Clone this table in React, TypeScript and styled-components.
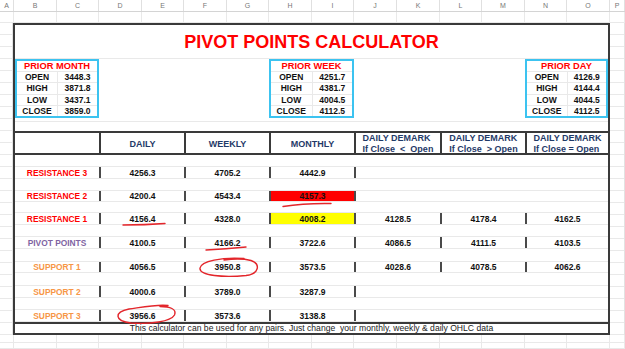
import React, {FC} from 'react';
import styled, {createGlobalStyle} from "styled-components";

const GlobalStyle = createGlobalStyle`
  body {
    margin: 0;
    background: #fff;
    font-family: "Liberation Sans", Arial, sans-serif;
  }
`

const COLS = [
    {l: 'A', w: 14}, {l: 'B', w: 43}, {l: 'C', w: 42}, {l: 'D', w: 43}, {l: 'E', w: 42},
    {l: 'F', w: 43}, {l: 'G', w: 42}, {l: 'H', w: 43}, {l: 'I', w: 42}, {l: 'J', w: 43},
    {l: 'K', w: 43}, {l: 'L', w: 42}, {l: 'M', w: 43}, {l: 'N', w: 42}, {l: 'O', w: 43},
    {l: 'P', w: 15},
]

const TRACKS = '84px 85px 85px 85px 86px 85px 83px'
const DARK = '#3a3a3a'
const FAINT = '#e9e9e9'

export const Page = styled.div`
  position: relative;
  width: 625px;
  height: 349px;
  overflow: hidden;
`
export const ColHeaderRow = styled.div`
  display: flex;
  height: 12px;
  box-sizing: border-box;
  border-bottom: 1px solid #d4d4d4;
`
export const ColHeaderCell = styled.div<{ $w: number }>`
  width: ${p => p.$w}px;
  flex: none;
  box-sizing: border-box;
  border-right: 1px solid #e0e0e0;
  display: flex;
  align-items: center;
  justify-content: center;
  font-size: 7px;
  color: #777;
`
export const GridRow = styled.div<{ $h: number }>`
  display: flex;
  height: ${p => p.$h}px;
`
export const GridCell = styled.div<{ $w: number }>`
  width: ${p => p.$w}px;
  flex: none;
  box-sizing: border-box;
  border-right: 1px solid ${FAINT};
  border-bottom: 1px solid ${FAINT};
`
export const SheetBody = styled.div`
  display: flex;
  height: 312px;
  background: repeating-linear-gradient(to bottom, transparent 0 11px, ${FAINT} 11px 12px);
`
export const Margin = styled.div<{ $w: number }>`
  width: ${p => p.$w}px;
  flex: none;
  border-right: 1px solid #e2e2e2;
  box-sizing: border-box;
`
export const Calc = styled.div`
  width: 597px;
  flex: none;
  box-sizing: border-box;
  border: 2px solid ${DARK};
  background: #fff;
  display: flex;
  flex-direction: column;
`
export const TitleBar = styled.div`
  height: 34px;
  box-sizing: border-box;
  display: flex;
  align-items: center;
  justify-content: center;
  padding-top: 1px;
  color: #ff0000;
  font-weight: bold;
  font-size: 18px;
  border-bottom: 1px solid ${FAINT};
`
export const PriorRow = styled.div`
  display: grid;
  grid-template-columns: ${TRACKS};
  height: 59px;
`
export const PriorBox = styled.div<{ $col: number }>`
  grid-column: ${p => p.$col};
  box-sizing: border-box;
  border: 2px solid #3cc3f0;
  display: grid;
  grid-template-rows: 10px repeat(4, 1fr);
`
export const PriorTitle = styled.div`
  color: #ff0000;
  font-weight: bold;
  font-size: 9.3px;
  line-height: 10px;
  text-align: center;
`
export const PriorLine = styled.div`
  display: grid;
  grid-template-columns: 1fr 1fr;
  border-top: 1px solid ${FAINT};
`
export const PriorCell = styled.div<{ $divider?: boolean }>`
  display: flex;
  align-items: center;
  justify-content: center;
  font-weight: bold;
  font-size: 8.5px;
  color: #111;
  border-left: ${p => p.$divider ? `1px solid ${FAINT}` : 'none'};
`
export const GapRow = styled.div`
  height: 13px;
  background: linear-gradient(${FAINT}, ${FAINT}) 0 3px / 100% 1px no-repeat;
`
export const HeaderRow = styled.div`
  display: grid;
  grid-template-columns: ${TRACKS};
  height: 24px;
  box-sizing: border-box;
  border-top: 2px solid ${DARK};
  border-bottom: 2px solid ${DARK};
`
export const HeadCell = styled.div<{ $first?: boolean }>`
  border-left: ${p => p.$first ? 'none' : `2px solid ${DARK}`};
  display: flex;
  flex-direction: column;
  align-items: center;
  justify-content: center;
  color: #1f3a68;
  font-weight: bold;
  font-size: 9px;
  line-height: 11px;
  white-space: pre;
`
export const DataRow = styled.div<{ $h: number }>`
  display: grid;
  grid-template-columns: ${TRACKS};
  height: ${p => p.$h}px;
  box-sizing: border-box;
  border-bottom: 1px solid ${FAINT};
`
export const RowLabel = styled.div<{ $color: string }>`
  display: flex;
  align-items: center;
  justify-content: center;
  color: ${p => p.$color};
  font-weight: bold;
  font-size: 8.4px;
`
export const ValueCell = styled.div<{ $mark?: boolean, $bg?: string }>`
  display: flex;
  align-items: center;
  justify-content: center;
  border-left: ${p => p.$mark ? '2px solid #4a4a4a' : '2px solid transparent'};
  background: ${p => p.$bg || 'transparent'};
  font-weight: bold;
  font-size: 8.5px;
  color: #111;
`
export const Footer = styled.div`
  height: 11px;
  box-sizing: border-box;
  border-top: 2px solid ${DARK};
  font-size: 8.6px;
  line-height: 9px;
  color: #222;
  text-align: center;
  white-space: pre;
`
export const Annotations = styled.svg`
  position: absolute;
  left: 0;
  top: 0;
  pointer-events: none;
`

interface IPrior {
    title: string
    col: number
    values: string[]
}

const PRIORS: IPrior[] = [
    {title: 'PRIOR MONTH', col: 1, values: ['3448.3', '3871.8', '3437.1', '3859.0']},
    {title: 'PRIOR WEEK', col: 4, values: ['4251.7', '4381.7', '4004.5', '4112.5']},
    {title: 'PRIOR DAY', col: 7, values: ['4126.9', '4144.4', '4044.5', '4112.5']},
]
const OHLC = ['OPEN', 'HIGH', 'LOW', 'CLOSE']

interface ILevel {
    label?: string
    color?: string
    values?: string[]
    bg?: string
    h: number
}

const RED = '#ff0000'
const PURPLE = '#8064a2'
const ORANGE = '#f79646'

const LEVELS: ILevel[] = [
    {h: 12},
    {label: 'RESISTANCE 3', color: RED, values: ['4256.3', '4705.2', '4442.9'], h: 12},
    {h: 12},
    {label: 'RESISTANCE 2', color: RED, values: ['4200.4', '4543.4', '4157.3'], bg: RED, h: 11},
    {h: 11},
    {label: 'RESISTANCE 1', color: RED, values: ['4156.4', '4328.0', '4008.2', '4128.5', '4178.4', '4162.5'], bg: '#ffff00', h: 12},
    {h: 12},
    {label: 'PIVOT POINTS', color: PURPLE, values: ['4100.5', '4166.2', '3722.6', '4086.5', '4111.5', '4103.5'], h: 12},
    {h: 13},
    {label: 'SUPPORT 1', color: ORANGE, values: ['4056.5', '3950.8', '3573.5', '4028.6', '4078.5', '4062.6'], h: 11},
    {h: 13},
    {label: 'SUPPORT 2', color: ORANGE, values: ['4000.6', '3789.0', '3287.9'], h: 12},
    {h: 12},
    {label: 'SUPPORT 3', color: ORANGE, values: ['3956.6', '3573.6', '3138.8'], h: 12},
]

const HEADS = ['DAILY', 'WEEKLY', 'MONTHLY', 'DAILY DEMARK\nIf Close  <  Open', 'DAILY DEMARK\nIf Close  > Open', 'DAILY DEMARK\nIf Close = Open']

const Level: FC<{ level: ILevel }> = ({level}) => {
    if (!level.label) return <DataRow $h={level.h}/>
    const v = level.values || []
    return (
        <DataRow $h={level.h}>
            <RowLabel $color={level.color || '#000'}>{level.label}</RowLabel>
            {[0, 1, 2, 3, 4, 5].map(i => (
                <ValueCell key={i} $mark={i < 4 || !!v[i]} $bg={i === 2 ? level.bg : undefined}>
                    {v[i] || ''}
                </ValueCell>
            ))}
        </DataRow>
    )
}

const App: FC = () => {
    return (
        <Page>
            <GlobalStyle/>
            <ColHeaderRow>
                {COLS.map(c => <ColHeaderCell key={c.l} $w={c.w}>{c.l}</ColHeaderCell>)}
            </ColHeaderRow>
            <GridRow $h={11}>
                {COLS.map(c => <GridCell key={c.l} $w={c.w}/>)}
            </GridRow>
            <SheetBody>
                <Margin $w={13}/>
                <Calc>
                    <TitleBar>PIVOT POINTS CALCULATOR</TitleBar>
                    <PriorRow>
                        {PRIORS.map(p => (
                            <PriorBox key={p.title} $col={p.col}>
                                <PriorTitle>{p.title}</PriorTitle>
                                {OHLC.map((k, i) => (
                                    <PriorLine key={k}>
                                        <PriorCell>{k}</PriorCell>
                                        <PriorCell $divider>{p.values[i]}</PriorCell>
                                    </PriorLine>
                                ))}
                            </PriorBox>
                        ))}
                    </PriorRow>
                    <GapRow/>
                    <HeaderRow>
                        <HeadCell $first/>
                        {HEADS.map(h => <HeadCell key={h}>{h}</HeadCell>)}
                    </HeaderRow>
                    {LEVELS.map((l, i) => <Level key={i} level={l}/>)}
                    <Footer>This calculator can be used for any pairs. Just change  your monthly, weekly &amp; daily OHLC data</Footer>
                </Calc>
                <Margin $w={15}/>
            </SheetBody>
            <GridRow $h={8}>
                {COLS.map(c => <GridCell key={c.l} $w={c.w}/>)}
            </GridRow>
            <GridRow $h={6}>
                {COLS.map(c => <GridCell key={c.l} $w={c.w}/>)}
            </GridRow>
            <Annotations width="625" height="349" viewBox="0 0 625 349" fill="none" stroke="#e3262b"
                         strokeWidth="1.4" strokeLinecap="round">
                <path d="M283 206.5 Q305 203 331 203.5"/>
                <path d="M123 225 Q145 225 165 223.5"/>
                <path d="M206 250 Q226 249 246 247"/>
                <path d="M244 258.5 C222 257 201 261 200 268 C199 276 224 277.5 246 275.5 C259 274 261 264 251 260.5 C243 258.5 232 259 224 260"/>
                <path d="M168 305.5 C158 304 143 307 129 309 C114 312 114 321 131 323 C150 324.5 171 321.5 174.5 315 C177 309 170 306.5 160 306.5"/>
            </Annotations>
        </Page>
    );
};

export default App;
